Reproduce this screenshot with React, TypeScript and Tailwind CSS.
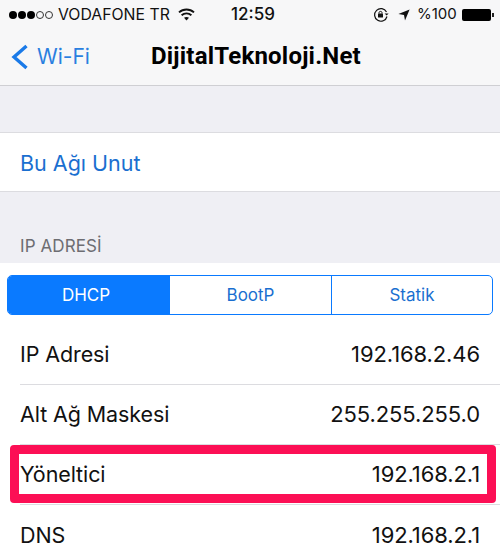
const font = { fontFamily: "Inter, 'Liberation Sans', sans-serif" };

function Row({ label, value, border = true }: { label: string; value: string; border?: boolean }) {
  return (
    <div className="pl-5">
      <div className={`flex h-[60px] items-center justify-between pr-5 text-[#111] ${border ? "border-b border-[#dcdce0]" : ""}`}>
        <span className="text-[21.5px] tracking-[-0.1px]">{label}</span>
        <span className="text-[22px] tracking-[-0.1px]">{value}</span>
      </div>
    </div>
  );
}

export default function App() {
  return (
    <div className="relative h-[559px] w-[500px] overflow-hidden bg-[#efeff4]" style={font}>
      {/* Status + nav bar */}
      <div className="h-[86px] border-b border-[#cfcfd3] bg-[#f7f7f8]">
        <div className="flex h-[28px] items-center whitespace-nowrap pl-[9px] pt-[1px] text-[15.8px] text-[#111]">
          <div className="flex w-[46px] shrink-0 items-center gap-[1px]">
            <span className="size-[8px] rounded-full bg-black" />
            <span className="size-[8px] rounded-full bg-black" />
            <span className="size-[8px] rounded-full bg-black" />
            <span className="size-[8px] rounded-full border border-[#333]" />
            <span className="size-[8px] rounded-full border border-[#333]" />
          </div>
          <span className="ml-[3px] w-[111px] shrink-0">VODAFONE TR</span>
          <svg className="ml-[9px] shrink-0" width="17" height="13" viewBox="0 0 17 13" fill="none" stroke="#111" strokeWidth="1.9">
            <path d="M1 4.4C5.2 0.6 11.8 0.6 16 4.4" />
            <path d="M3.6 7.2C6.4 4.8 10.6 4.8 13.4 7.2" />
            <path d="M8.5 12.6L6 9.8C7.4 8.7 9.6 8.7 11 9.8Z" fill="#111" stroke="none" />
          </svg>
          <span className="ml-[36px] w-[44px] shrink-0 text-[17px] font-medium">12:59</span>
          <svg className="ml-[98px] shrink-0" width="16" height="16" viewBox="0 0 16 16" fill="none" stroke="#111" strokeWidth="1.2">
            <path d="M14 9.5A6.3 6.3 0 1 1 13.5 5" />
            <path d="M15.6 6.4L13.6 8.6L11.6 6.4Z" fill="#111" stroke="none" />
            <rect x="5" y="6.6" width="5" height="4" rx="0.6" fill="#111" stroke="none" />
            <path d="M6 6.6V5.6C6 4 9 4 9 5.6V6.6" strokeWidth="1" />
          </svg>
          <svg className="ml-[9px] shrink-0" width="12" height="12" viewBox="0 0 12 12" fill="#111">
            <path d="M11.6 0.4L7 11.6L6 6L0.4 5Z" />
          </svg>
          <span className="ml-[7px] w-[40px] shrink-0 text-[15px]">%100</span>
          <div className="ml-[5px] flex shrink-0 items-center">
            <div className="h-[12px] w-[29px] rounded-[2px] bg-black" />
            <div className="ml-[1px] h-[4px] w-[1.5px] bg-[#222]" />
          </div>
        </div>
        <div className="relative flex h-[57px] items-center">
          <svg className="ml-[11px]" width="18" height="26" viewBox="0 0 18 26" fill="none" stroke="#1a7ae8" strokeWidth="3.4">
            <path d="M15.5 2L3 13L15.5 24" />
          </svg>
          <span className="ml-[8px] text-[21px] text-[#2a7fe0]">Wi-Fi</span>
          <span className="absolute left-[151px] top-[10px] text-[24px] font-bold tracking-[0.2px] text-black" style={{ fontFamily: "Roboto, sans-serif" }}>
            DijitalTeknoloji.Net
          </span>
        </div>
      </div>

      {/* Forget network */}
      <div className="mt-[46px] flex h-[60px] items-center border-y border-[#dcdce0] bg-white pl-5 pt-[3px] text-[21.5px] text-[#1a6fd0]">
        Bu Ağı Unut
      </div>

      <div className="flex h-[71px] items-end pb-[4px] pl-5 text-[17px] tracking-[0.1px] text-[#6d6d72]">IP ADRESİ</div>

      <div className="bg-white">
        {/* Segmented control */}
        <div className="px-[7px] pb-[10px] pt-[12px]">
          <div className="flex h-[40px] overflow-hidden rounded-[5px] border border-[#0a7aff] pt-0 text-[17px] text-[#1a6fd0]">
            <div className="flex w-[162px] items-center justify-center bg-[#0a7aff] pr-[6px] pt-[2px] text-white">DHCP</div>
            <div className="flex w-[162px] items-center justify-center border-r border-[#0a7aff] pt-[2px]">BootP</div>
            <div className="flex flex-1 items-center justify-center pt-[2px]">Statik</div>
          </div>
        </div>
        <Row label="IP Adresi" value="192.168.2.46" />
        <Row label="Alt Ağ Maskesi" value="255.255.255.0" />
        <Row label="Yöneltici" value="192.168.2.1" />
        <Row label="DNS" value="192.168.2.1" border={false} />
      </div>

      {/* Red highlight drawn over the router row */}
      <div className="absolute left-[10px] top-[445px] h-[58px] w-[486px] rounded-[4px] border-[9px] border-[#fc0f55]" />
    </div>
  );
}
